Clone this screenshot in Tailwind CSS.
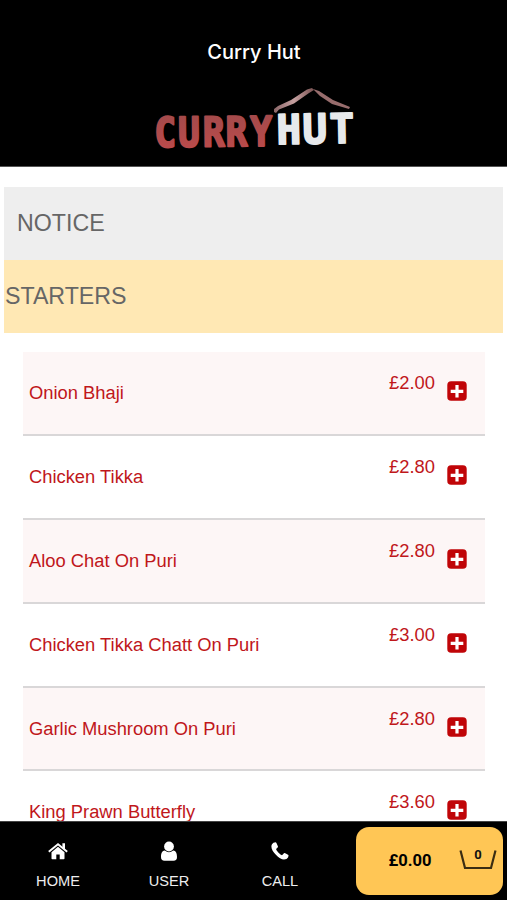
<!DOCTYPE html>
<html lang="en">
<head>
<meta charset="utf-8">
<title>Curry Hut</title>
<script src="https://cdn.jsdelivr.net/npm/@tailwindcss/browser@4"></script>
</head>
<body class="h-[900px] w-[507px] overflow-hidden bg-white font-['Liberation_Sans',Arial,sans-serif]">
<svg class="hidden">
  <symbol id="plus" viewBox="0 0 20 20"><rect x=".3" y=".3" width="19.400" height="19.400" rx="3.800" fill="#c00508"/><path d="M10 4v12.600M3.700 10.300h12.600" stroke="#fff" stroke-width="3.200"/></symbol>
</svg>
<div class="flex h-full flex-col">
  <header class="flex h-[167px] shrink-0 flex-col items-center border-b border-[#555] bg-black pt-[38px]">
    <h1 class="pl-[1px] text-[20px] leading-7 font-medium text-white [font-family:Inter,sans-serif]">Curry Hut</h1>
    <svg class="mt-[14px] h-[80px] w-[220px]" viewBox="145 80 220 80" role="img">
      <defs>
        <linearGradient id="red" x1="0" y1="0" x2="0" y2="1"><stop offset="0" stop-color="#a04a4b"/><stop offset="1" stop-color="#bf4b4b"/></linearGradient>
        <linearGradient id="roof"><stop offset="0" stop-color="#8b6668"/><stop offset=".5" stop-color="#c5a0a0"/><stop offset="1" stop-color="#795151"/></linearGradient>
      </defs>
      <g font-family="DejaVu Sans Mono" font-weight="700" font-size="41" stroke-linejoin="round">
        <text x="176.500 203.500 231.500 257.500 285.500" y="146.500" fill="url(#red)" stroke="url(#red)" stroke-width="2.200" transform="rotate(-.6 215 131) scale(.88 1)">CURRY</text>
        <text x="277.500 303.500 330.500" y="143.500" fill="#e7e9eb" stroke="#e7e9eb" stroke-width="1.800" transform="rotate(-1.200 315 129)">HUT</text>
      </g>
      <path d="M275 112V109L279 106 292 100 308 89.500 313 88 315 90 310 93 295 103.500 280 109.500 277 113Z" fill="url(#roof)"/>
      <path d="M314 89L320 91 334 100 351 107 350 109 333 104 321 96Z" fill="#986d6d"/>
    </svg>
  </header>
  <main class="min-h-0 flex-1 overflow-hidden px-1 pt-[19.500px]">
    <h2 class="flex h-[73.500px] items-center bg-[#eeeeee] pl-[13px] text-[23.2px] text-[#666]">NOTICE</h2>
    <h2 class="flex h-[73px] items-center bg-[#ffe8b4] pl-[1px] text-[23.2px] text-[#666]">STARTERS</h2>
    <ul class="mt-[19px] mr-[18px] ml-[19px] text-[18.35px] leading-[22px] text-[#c0171b]">
      <li class="flex h-[83.9px] justify-between border-b-2 border-[#d9d7d8] bg-[#fdf6f6] pr-[18px] pl-[6px]"><span class="pt-[30px]">Onion Bhaji</span><span class="flex gap-[12px] pt-[20px]">£2.00<svg class="mt-[9px] size-5"><use href="#plus"/></svg></span></li>
      <li class="flex h-[83.9px] justify-between border-b-2 border-[#d9d7d8] pr-[18px] pl-[6px]"><span class="pt-[30px]">Chicken Tikka</span><span class="flex gap-[12px] pt-[20px]">£2.80<svg class="mt-[9px] size-5"><use href="#plus"/></svg></span></li>
      <li class="flex h-[83.9px] justify-between border-b-2 border-[#d9d7d8] bg-[#fdf6f6] pr-[18px] pl-[6px]"><span class="pt-[30px]">Aloo Chat On Puri</span><span class="flex gap-[12px] pt-[20px]">£2.80<svg class="mt-[9px] size-5"><use href="#plus"/></svg></span></li>
      <li class="flex h-[83.9px] justify-between border-b-2 border-[#d9d7d8] pr-[18px] pl-[6px]"><span class="pt-[30px]">Chicken Tikka Chatt On Puri</span><span class="flex gap-[12px] pt-[20px]">£3.00<svg class="mt-[9px] size-5"><use href="#plus"/></svg></span></li>
      <li class="flex h-[83.9px] justify-between border-b-2 border-[#d9d7d8] bg-[#fdf6f6] pr-[18px] pl-[6px]"><span class="pt-[30px]">Garlic Mushroom On Puri</span><span class="flex gap-[12px] pt-[20px]">£2.80<svg class="mt-[9px] size-5"><use href="#plus"/></svg></span></li>
      <li class="flex h-[83.9px] justify-between pr-[18px] pl-[6px]"><span class="pt-[30px]">King Prawn Butterfly</span><span class="flex gap-[12px] pt-[20px]">£3.60<svg class="mt-[9px] size-5"><use href="#plus"/></svg></span></li>
    </ul>
  </main>
  <nav class="flex h-[79.5px] shrink-0 border-t border-[#444] bg-black pl-[2.5px] text-[14.6px] leading-[18px] text-[#eee]">
    <a class="flex w-[111px] flex-col items-center pt-[18px]">
      <svg class="h-[24px] w-[20px]" viewBox="0 0 20 24" fill="#fff"><path d="M10 6.800L16.500 12.200V18.500Q16.500 19.300 15.700 19.300H11.700V14.500H8.300V19.300H4.300Q3.500 19.300 3.500 18.500V12.200Z"/><path d="M.8 11.700L10 4.200 19.200 11.700" fill="none" stroke="#fff" stroke-width="1.900"/><path d="M14.400 3.300H17V10L14.400 7.800Z"/></svg>
      <span class="mt-[8px]">HOME</span></a>
    <a class="flex w-[111px] flex-col items-center pt-[18px]">
      <svg class="h-[24px] w-[20px]" viewBox="0 0 20 24" fill="#fff"><circle cx="10" cy="6.500" r="4.900"/><path d="M5.800 10.400Q10 14 14.200 10.400C17 10.500 18 13.500 18 17Q18 20.800 14.500 20.800H5.500Q2 20.800 2 17C2 13.500 3 10.500 5.800 10.400Z"/></svg>
      <span class="mt-[8px]">USER</span></a>
    <a class="flex w-[111px] flex-col items-center pt-[18px]">
      <svg class="h-[24px] w-[20px]" viewBox="0 0 20 24" fill="#fff"><path d="M2 4.300Q3 2.200 5.700 2.200Q6.300 2.200 8 6.500Q8.300 7.100 6.100 9Q5.900 9.600 8.300 12.400Q10.800 14.900 12 15.200L14.200 13Q14.700 12.600 18.400 15Q18.800 15.500 18 17.600Q17 19.600 14 19.600C9.500 19.400 1.200 11.500 1.400 6.500Q1.400 5.200 2 4.300Z"/></svg>
      <span class="mt-[8px]">CALL</span></a>
    <div class="mt-[5px] ml-[20px] flex h-[68px] w-[147px] items-center rounded-[13px] bg-[#ffc655] pl-[33px] text-black [font-family:Roboto,sans-serif]">
      <span class="w-[70px] text-[16.5px] font-bold">£0.00</span>
      <svg class="mt-[-4px] h-[24px] w-[38px]" viewBox="0 0 38 24"><path d="M1.500 3.500L6 21H32L36.500 3.500" fill="none" stroke="#3b2d12" stroke-width="2.200"/><text x="19" y="12" text-anchor="middle" font-size="13" font-weight="700" fill="#111">0</text></svg>
    </div>
  </nav>
</div>
</body>
</html>
